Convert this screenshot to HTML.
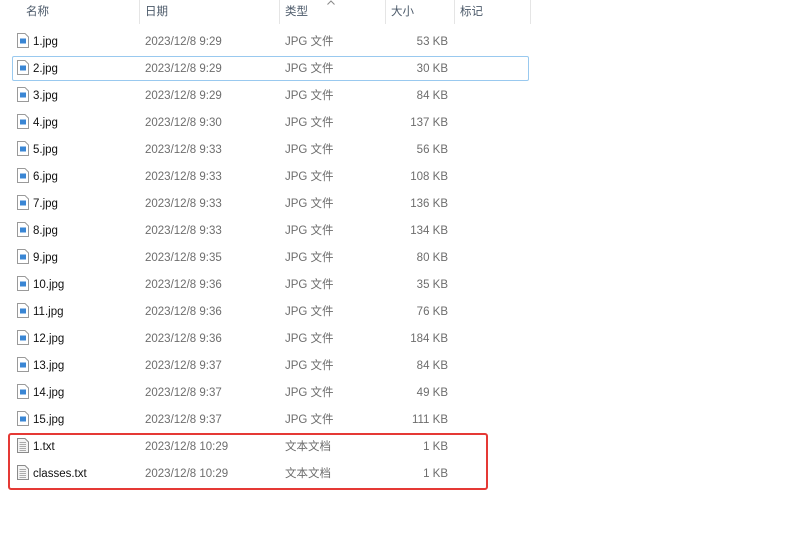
<!DOCTYPE html>
<html><head><meta charset="utf-8"><style>
body{margin:0;width:800px;height:544px;background:#fff;position:relative;overflow:hidden;font-family:"Liberation Sans","Noto Sans CJK SC",sans-serif;font-size:11.5px;color:#1a1a1a}
.h{position:absolute;top:1px;line-height:22px;color:#4c5a6a;font-size:11.5px}
.sep{position:absolute;top:0;width:1px;height:24px;background:#e5e5e5}
.r{position:absolute;left:0;width:540px;height:20px}
.r span{position:absolute;top:1px;line-height:20px;height:20px;white-space:nowrap;vertical-align:top}
.n{left:33px;color:#111}
.d{left:145px;color:#6d6d6d}
.t{left:285px;color:#6d6d6d}
.s{right:92px;color:#6d6d6d}
.ic{position:absolute;left:17px;top:2px}
</style></head><body>
<div class="h" style="left:26px">名称</div>
<div class="h" style="left:145px">日期</div>
<div class="h" style="left:285px">类型</div>
<div class="h" style="left:391px">大小</div>
<div class="h" style="left:460px">标记</div>
<svg style="position:absolute;left:327px;top:0" width="8" height="5"><path d="M0.5 4.5L4 1L7.5 4.5" fill="none" stroke="#888"/></svg>
<div class="sep" style="left:139px"></div><div class="sep" style="left:279px"></div><div class="sep" style="left:385px"></div><div class="sep" style="left:454px"></div><div class="sep" style="left:530px"></div>
<div style="position:absolute;left:12px;top:56px;width:515px;height:23px;border:1px solid #99c9ef;border-radius:2px"></div>
<div style="position:absolute;left:8px;top:433px;width:476px;height:53px;border:2px solid #e53935;border-radius:3px"></div>
<div id="rows"></div>
<script>
var d=[["1.jpg","9:29",53],["2.jpg","9:29",30],["3.jpg","9:29",84],["4.jpg","9:30",137],["5.jpg","9:33",56],["6.jpg","9:33",108],["7.jpg","9:33",136],["8.jpg","9:33",134],["9.jpg","9:35",80],["10.jpg","9:36",35],["11.jpg","9:36",76],["12.jpg","9:36",184],["13.jpg","9:37",84],["14.jpg","9:37",49],["15.jpg","9:37",111],["1.txt","10:29",1],["classes.txt","10:29",1]];
var jpg='<svg class="ic" width="12" height="15" viewBox="0 0 12 15"><path d="M0.5 0.5H8L11.5 4V14.5H0.5Z" fill="#fff" stroke="#9a9a9a"/><rect x="3" y="5.5" width="6" height="5" fill="#3a86d4"/></svg>';
var txt='<svg class="ic" width="12" height="15" viewBox="0 0 12 15"><path d="M0.5 0.5H8L11.5 4V14.5H0.5Z" fill="#f4f4f4" stroke="#8a8a8a"/><path d="M2.5 4.5H9M2.5 6.5H9M2.5 8.5H9M2.5 10.5H9M2.5 12.5H9" stroke="#aaa"/></svg>';
var h='';d.forEach(function(r,i){var t=r[0].indexOf('txt')>0;h+='<div class="r" style="top:'+(31+27*i)+'px">'+(t?txt:jpg)+'<span class="n">'+r[0]+'</span><span class="d">2023/12/8 '+r[1]+'</span><span class="t">'+(t?'文本文档':'JPG 文件')+'</span><span class="s">'+r[2]+' KB</span></div>';});
document.getElementById('rows').innerHTML=h;
</script>
</body></html>
